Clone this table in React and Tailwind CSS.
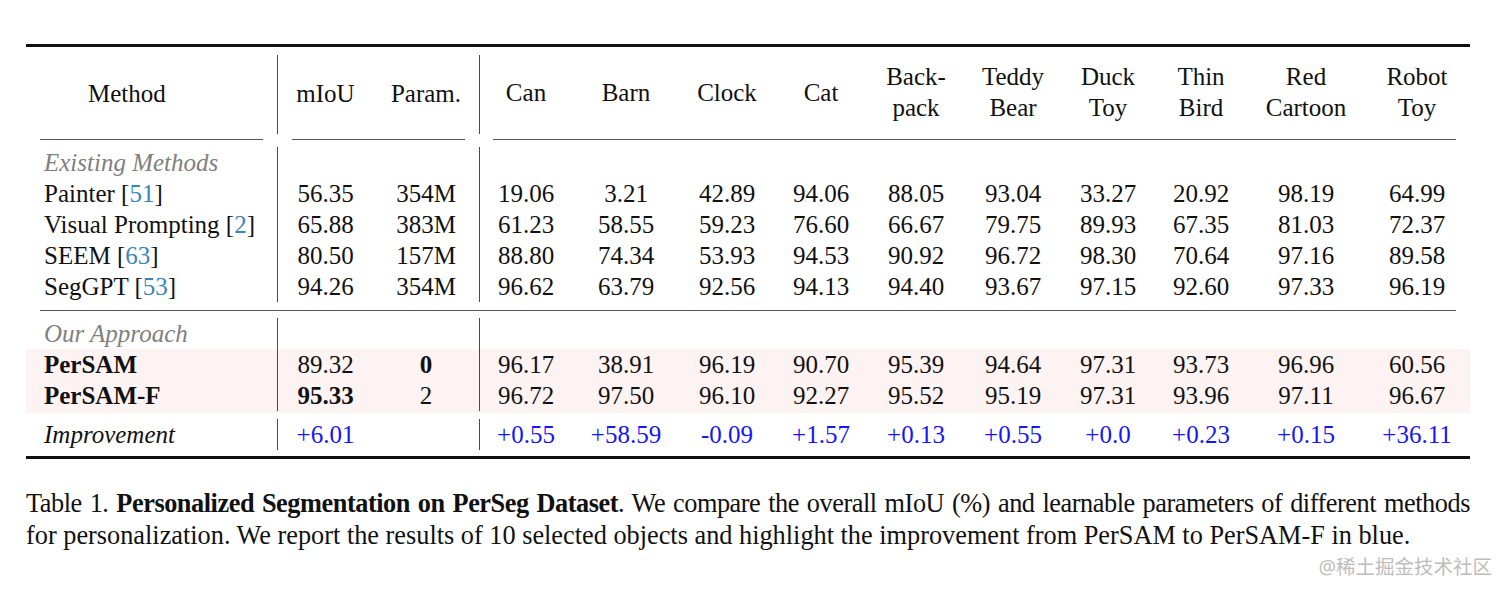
import React from "react";

const cols =
  "grid grid-cols-[251px_1px_95px_106px_1px_92px_108px_94px_94px_96px_98px_92px_94px_116px_106px]";

const header = [
  ["mIoU"],
  ["Param."],
  ["Can"],
  ["Barn"],
  ["Clock"],
  ["Cat"],
  ["Back-", "pack"],
  ["Teddy", "Bear"],
  ["Duck", "Toy"],
  ["Thin", "Bird"],
  ["Red", "Cartoon"],
  ["Robot", "Toy"],
];

const existing = [
  { name: "Painter", cite: "51", vals: ["56.35", "354M", "19.06", "3.21", "42.89", "94.06", "88.05", "93.04", "33.27", "20.92", "98.19", "64.99"] },
  { name: "Visual Prompting", cite: "2", vals: ["65.88", "383M", "61.23", "58.55", "59.23", "76.60", "66.67", "79.75", "89.93", "67.35", "81.03", "72.37"] },
  { name: "SEEM", cite: "63", vals: ["80.50", "157M", "88.80", "74.34", "53.93", "94.53", "90.92", "96.72", "98.30", "70.64", "97.16", "89.58"] },
  { name: "SegGPT", cite: "53", vals: ["94.26", "354M", "96.62", "63.79", "92.56", "94.13", "94.40", "93.67", "97.15", "92.60", "97.33", "96.19"] },
];

const ours = [
  { name: "PerSAM", vals: ["89.32", "0", "96.17", "38.91", "96.19", "90.70", "95.39", "94.64", "97.31", "93.73", "96.96", "60.56"], bold: [1] },
  { name: "PerSAM-F", vals: ["95.33", "2", "96.72", "97.50", "96.10", "92.27", "95.52", "95.19", "97.31", "93.96", "97.11", "96.67"], bold: [0] },
];

const improvement = ["+6.01", "", "+0.55", "+58.59", "-0.09", "+1.57", "+0.13", "+0.55", "+0.0", "+0.23", "+0.15", "+36.11"];

function VLine() {
  return <div className="bg-[#4a4a4a]" />;
}

function Row({ first, vals, bold = [], blue = false }) {
  const cell = (v, i) => (
    <div
      key={i}
      className={`text-center ${bold.includes(i) ? "font-bold" : ""} ${blue ? "text-[#1515f5]" : ""}`}
    >
      {v}
    </div>
  );
  return (
    <div className={`${cols} h-[31px] leading-[31px]`}>
      <div className="pl-[18px] whitespace-nowrap">{first}</div>
      <VLine />
      {vals.slice(0, 2).map((v, i) => cell(v, i))}
      <VLine />
      {vals.slice(2).map((v, i) => cell(v, i + 2))}
    </div>
  );
}

function Cite({ n }) {
  return (
    <span>
      [<span className="text-[#3a86b9]">{n}</span>]
    </span>
  );
}

export default function App() {
  return (
    <div className="w-[1512px] h-[596px] bg-white text-[#111] font-['Liberation_Serif',serif] text-[25px] overflow-hidden">
      <div className="ml-[26px] w-[1444px] pt-[44px]">
        {/* top rule */}
        <div className="h-[3px] bg-[#111]" />
        <div className="h-[8px]" />

        {/* header */}
        <div className={`${cols} h-[79px] leading-[31px]`}>
          <div className="pl-[62px] pb-[3px] flex items-center">Method</div>
          <VLine />
          {header.slice(0, 2).map((h, i) => (
            <div key={i} className="flex flex-col items-center justify-center pb-[3px]">
              {h.map((t) => (
                <span key={t}>{t}</span>
              ))}
            </div>
          ))}
          <VLine />
          {header.slice(2).map((h, i) => (
            <div key={i} className="flex flex-col items-center justify-center pb-[5px]">
              {h.map((t) => (
                <span key={t}>{t}</span>
              ))}
            </div>
          ))}
        </div>

        {/* cmidrules */}
        <div className="h-[14px] flex items-start pt-[5px]">
          <div className="w-[251px] px-[14px]">
            <div className="h-px bg-[#555]" />
          </div>
          <div className="w-px" />
          <div className="w-[201px] px-[14px]">
            <div className="h-px bg-[#555]" />
          </div>
          <div className="w-px" />
          <div className="w-[990px] pl-[13px] pr-[14px]">
            <div className="h-px bg-[#555]" />
          </div>
        </div>

        {/* existing methods */}
        <div className="pb-[1px] -mt-[1px]">
          <Row
            first={<span className="italic text-[#808080]">Existing Methods</span>}
            vals={Array(12).fill("")}
          />
          {existing.map((r) => (
            <Row
              key={r.name}
              first={
                <>
                  {r.name} <Cite n={r.cite} />
                </>
              }
              vals={r.vals}
            />
          ))}
        </div>

        {/* midrule */}
        <div className="h-[15px] flex items-center px-[14px]">
          <div className="h-px w-full bg-[#555]" />
        </div>

        {/* our approach */}
        <Row
          first={<span className="italic text-[#808080]">Our Approach</span>}
          vals={Array(12).fill("")}
        />
        <div className="bg-[#fdf3f3]">
          {ours.map((r) => (
            <Row key={r.name} first={<span className="font-bold">{r.name}</span>} vals={r.vals} bold={r.bold} />
          ))}
          <div className="h-[2px]" />
        </div>
        <div className="h-[7px]" />

        <div className="-mt-[1px]">
          <Row first={<span className="italic">Improvement</span>} vals={improvement} blue />
        </div>

        <div className="h-[6px]" />
        {/* bottom rule */}
        <div className="h-[3px] bg-[#111]" />

        {/* caption */}
        <div className="mt-[29px] text-[26.3px] leading-[32px]">
          <div className="text-justify [text-align-last:justify] tracking-[-0.45px] whitespace-nowrap">
            Table 1. <span className="font-bold">Personalized Segmentation on PerSeg Dataset</span>. We compare the overall mIoU (%) and learnable parameters of different methods
          </div>
          <div>
            for personalization. We report the results of 10 selected objects and highlight the improvement from PerSAM to PerSAM-F in blue.
          </div>
        </div>
      </div>

      <div className="flex justify-end pr-[20px]">
        <span className="text-[19.5px] leading-[30px] text-[#bdbdbd] font-['Noto_Sans','Noto_Sans_CJK_SC',sans-serif]">
          @稀土掘金技术社区
        </span>
      </div>
    </div>
  );
}
